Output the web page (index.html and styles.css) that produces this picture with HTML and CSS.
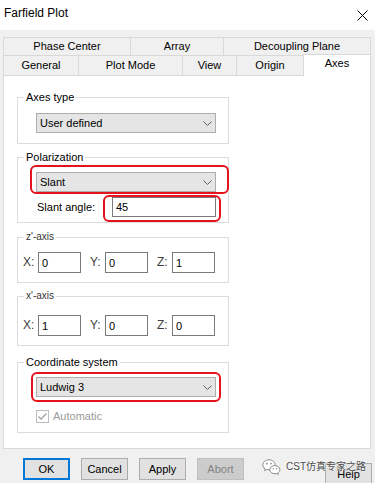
FILE: index.html
```html
<!DOCTYPE html>
<html lang="en">
<head>
    <meta charset="UTF-8">
    <meta name="viewport" content="width=device-width, initial-scale=1.0">
    <title>Farfield Plot</title>
    <link rel="stylesheet" href="styles.css">
</head>
<body>

<!-- Title bar -->
<div class="titlebar">
    <span class="title">Farfield Plot</span>
    <svg class="close" width="11" height="11" viewBox="0 0 11 11">
        <path d="M0.5 0.5 L10.5 10.5 M10.5 0.5 L0.5 10.5" stroke="#000" stroke-width="1" fill="none"/>
    </svg>
</div>

<!-- Tabs -->
<div class="tabs">
    <div class="tab-row top">
        <div class="tab w-phase">Phase Center</div>
        <div class="tab w-array">Array</div>
        <div class="tab w-decoup last">Decoupling Plane</div>
    </div>
    <div class="tab-row bottom">
        <div class="tab w-general">General</div>
        <div class="tab w-plot">Plot Mode</div>
        <div class="tab w-view">View</div>
        <div class="tab w-origin">Origin</div>
        <div class="tab w-axes last active">Axes</div>
    </div>
</div>

<!-- Axes page -->
<div class="panel">

    <fieldset class="group g-axes">
        <legend>Axes type</legend>
        <div class="group-body">
            <div class="combo">
                <span>User defined</span>
                <svg class="chevron" width="9" height="5" viewBox="0 0 9 5"><polyline points="0.5,0.5 4.5,4.5 8.5,0.5" fill="none" stroke="#606060"/></svg>
            </div>
        </div>
    </fieldset>

    <fieldset class="group g-pol">
        <legend>Polarization</legend>
        <div class="group-body">
            <div class="mark mark-slant">
                <div class="combo">
                    <span>Slant</span>
                    <svg class="chevron" width="9" height="5" viewBox="0 0 9 5"><polyline points="0.5,0.5 4.5,4.5 8.5,0.5" fill="none" stroke="#606060"/></svg>
                </div>
            </div>
            <div class="angle-row">
                <label class="angle-label">Slant angle:</label>
                <span class="mark mark-angle"><input class="field angle" type="text" value="45" readonly></span>
            </div>
        </div>
    </fieldset>

    <fieldset class="group g-z small">
        <legend>z'-axis</legend>
        <div class="group-body">
            <div class="xyz">
                <div class="coord"><label>X:</label><input class="field" type="text" value="0" readonly></div>
                <div class="coord"><label>Y:</label><input class="field" type="text" value="0" readonly></div>
                <div class="coord"><label>Z:</label><input class="field" type="text" value="1" readonly></div>
            </div>
        </div>
    </fieldset>

    <fieldset class="group g-x small">
        <legend>x'-axis</legend>
        <div class="group-body">
            <div class="xyz">
                <div class="coord"><label>X:</label><input class="field" type="text" value="1" readonly></div>
                <div class="coord"><label>Y:</label><input class="field" type="text" value="0" readonly></div>
                <div class="coord"><label>Z:</label><input class="field" type="text" value="0" readonly></div>
            </div>
        </div>
    </fieldset>

    <fieldset class="group g-coord">
        <legend>Coordinate system</legend>
        <div class="group-body">
            <div class="mark mark-coord">
                <div class="combo">
                    <span>Ludwig 3</span>
                    <svg class="chevron" width="9" height="5" viewBox="0 0 9 5"><polyline points="0.5,0.5 4.5,4.5 8.5,0.5" fill="none" stroke="#606060"/></svg>
                </div>
            </div>
            <div class="check-row">
                <svg width="13" height="13" viewBox="0 0 13 13">
                    <rect x="0.5" y="0.5" width="12" height="12" fill="#fff" stroke="#bcbcbc"/>
                    <polyline points="2.5,6.5 5,9 10.5,3.5" fill="none" stroke="#a0a0a0" stroke-width="1.3"/>
                </svg>
                <span>Automatic</span>
            </div>
        </div>
    </fieldset>

</div>

<!-- Dialog buttons -->
<div class="buttons">
    <button class="btn default">OK</button>
    <button class="btn">Cancel</button>
    <button class="btn">Apply</button>
    <button class="btn" disabled>Abort</button>
    <button class="btn help">Help</button>

    <div class="watermark">
        <svg width="19" height="16" viewBox="0 0 19 16">
            <path d="M7 0.8 C3.4 0.8 0.8 3.1 0.8 5.9 C0.8 7.5 1.7 8.9 3.1 9.8 L2.6 11.6 L4.8 10.5 C5.5 10.7 6.2 10.8 7 10.8 C10.6 10.8 13.2 8.5 13.2 5.8 C13.2 3.1 10.6 0.8 7 0.8 Z" fill="#fff" stroke="#8a8a8a"/>
            <path d="M12.8 6.6 C9.9 6.6 7.8 8.5 7.8 10.7 C7.8 12.9 9.9 14.7 12.8 14.7 C13.4 14.7 13.9 14.6 14.4 14.5 L16.2 15.4 L15.8 13.9 C17.1 13.2 17.9 12 17.9 10.7 C17.9 8.5 15.7 6.6 12.8 6.6 Z" fill="#fff" stroke="#8a8a8a"/>
            <circle cx="4.9" cy="4.6" r="0.9" fill="#8a8a8a"/>
            <circle cx="9" cy="4.6" r="0.9" fill="#8a8a8a"/>
            <circle cx="11.2" cy="9.8" r="0.7" fill="#8a8a8a"/>
            <circle cx="14.5" cy="9.8" r="0.7" fill="#8a8a8a"/>
        </svg>
        <span>CST仿真专家之路</span>
    </div>
</div>

</body>
</html>
```

FILE: styles.css
```css
* { box-sizing: border-box; }
body { margin: 0; height: 100vh; overflow: hidden; background: #f0f0f0; color: #000; font: 11px/13px "Liberation Sans", Arial, sans-serif; }

/* title bar */
.titlebar { height: 30px; background: #fff; display: flex; align-items: center; justify-content: space-between; padding: 0 7px 0 4px; }
.title { font-size: 12px; margin-bottom: 4px; }

/* tabs */
.tabs { margin: 7px 0 0 3px; width: 368px; }
.tab-row { display: flex; }
.tab-row.top { height: 18px; }
.tab-row.bottom { height: 20px; align-items: flex-end; }
.tab { display: flex; align-items: center; justify-content: center; height: 100%; background: #f0f0f0; border: 1px solid #d9d9d9; border-right: none; border-bottom: none; }
.tab.last { border-right: 1px solid #d9d9d9; }
.tab.active { position: relative; height: 22px; margin-bottom: -1px; background: #fff; align-items: flex-start; padding-top: 2px; }
.w-phase { width: 127px; }
.w-array { width: 93px; }
.w-decoup { width: 148px; }
.w-general { width: 75px; }
.w-plot { width: 104px; }
.w-view { width: 54px; }
.w-origin { width: 67px; }
.w-axes { width: 68px; }

/* page */
.panel { margin-left: 3px; width: 368px; height: 374px; background: #fff; border: 1px solid #d9d9d9; padding: 15px 0 0 13px; }

.group { width: 212px; margin: 0; padding: 0; min-width: 0; border: 1px solid #dcdcdc; }
.group legend { margin-left: 6px; padding: 0 2px; }
.group.small legend { font-size: 10px; line-height: 12px; color: #333; }
.group-body { padding: 8px 12px 9px 18px; }
.g-axes .group-body { padding-top: 9px; padding-bottom: 10px; }
.g-pol { margin-top: 7px; }
.g-pol .group-body { padding-bottom: 5px; }
.g-z { margin-top: 8px; }
.g-z .group-body { padding: 9px 0 9px 5px; }
.g-x { margin-top: 7px; }
.g-x .group-body { padding: 13px 0 9px 5px; }
.g-coord { margin-top: 10px; }

.combo { display: flex; align-items: center; justify-content: space-between; width: 180px; height: 20px; padding: 0 3px; background: #e5e5e5; border: 1px solid #adadad; }
.chevron { display: block; }

.field { display: block; height: 21px; margin: 0; padding: 0 3px; border: 1px solid #7a7a7a; background: #fff; font: inherit; color: #000; outline: none; }

.angle-row { display: flex; align-items: center; margin-top: 5px; }
.angle-label { width: 76px; padding-left: 1px; }
.field.angle { width: 104px; height: 20px; }

.xyz { display: flex; gap: 9px; }
.coord { display: flex; align-items: center; }
.coord label { width: 15px; color: #404040; font-size: 12px; }
.coord .field { width: 43px; }

.check-row { display: flex; align-items: center; gap: 4px; margin-top: 13px; color: #9a9a9a; }
.check-row svg { display: block; }

/* red annotation frames */
.mark { position: relative; display: block; }
.mark::after { content: ""; position: absolute; border: 2px solid #e5141c; border-radius: 6px; }
.mark-slant::after { top: -7px; right: -13px; bottom: -2px; left: -6px; }
.mark-angle::after { top: -2px; right: -5px; bottom: -5px; left: -9px; }
.mark-coord::after { top: -5px; right: -5px; bottom: -5px; left: -5px; }

/* buttons */
.buttons { position: relative; display: flex; align-items: flex-start; gap: 11px; margin-top: 9px; padding: 0 3px 0 23px; }
.btn { width: 47px; height: 22px; padding: 0; background: #e1e1e1; border: 1px solid #adadad; font: inherit; color: #000; }
.btn.default { border: 2px solid #0078d7; }
.btn:disabled { background: #cccccc; border-color: #bfbfbf; color: #838383; }
.btn.help { margin-left: auto; margin-top: 5px; }

.watermark { position: absolute; left: 262px; top: 1px; display: flex; align-items: center; gap: 5px; font: 10px/14px "Liberation Sans", "Noto Sans CJK SC", sans-serif; color: #4a4a4a; text-shadow: 0 0 2px #fff, 0 0 2px #fff; }
.watermark svg { display: block; }
```
